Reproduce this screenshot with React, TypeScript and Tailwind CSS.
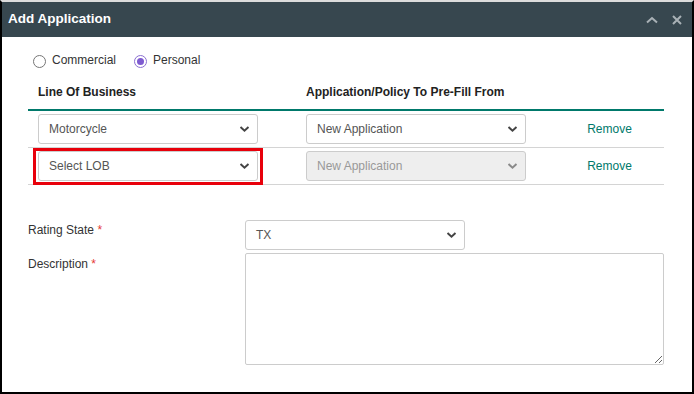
import { ReactNode } from "react";

const font = { fontFamily: "'Liberation Sans', Arial, sans-serif" };

function Chevron({ light }: { light?: boolean }) {
  return (
    <svg
      width="11"
      height="7"
      viewBox="0 0 11 7"
      className="pointer-events-none absolute right-[7px] top-1/2 -translate-y-1/2"
    >
      <path
        d="M1.5 1.5 L5.5 5.2 L9.5 1.5"
        fill="none"
        stroke={light ? "#8a8a8a" : "#444"}
        strokeWidth="2"
      />
    </svg>
  );
}

function Select({ value, disabled, className = "" }: { value: string; disabled?: boolean; className?: string }) {
  return (
    <div
      className={`relative flex h-[30px] items-center rounded-[3px] border border-[#cccccc] pl-[10px] text-[12px] ${
        disabled ? "bg-[#eeeeee] text-[#999]" : "bg-white text-[#555]"
      } ${className}`}
    >
      {value}
      <Chevron light={disabled} />
    </div>
  );
}

function Row({ children }: { children: ReactNode }) {
  return (
    <div className="grid h-[37px] grid-cols-[268px_259px_1fr] items-center border-b border-[#d4d4d4]">
      {children}
    </div>
  );
}

export default function App() {
  return (
    <div className="h-[394px] w-[694px] bg-white" style={font}>
      <div className="flex h-full flex-col border-x-2 border-b-2 border-t-[2px] border-black border-t-[#dcdcdc]">
        {/* header */}
        <div className="flex h-[35px] items-center bg-[#37474f] pl-[6px] pr-[10px]">
          <span className="text-[13.5px] font-bold text-white">Add Application</span>
          <div className="ml-auto flex items-center gap-[14px]">
            <svg width="12" height="8" viewBox="0 0 12 8">
              <path d="M1 6.5 L6 2 L11 6.5" fill="none" stroke="#a9b1b6" strokeWidth="2" />
            </svg>
            <svg width="10" height="10" viewBox="0 0 10 10">
              <path d="M1 1 L9 9 M9 1 L1 9" fill="none" stroke="#a9b1b6" strokeWidth="2" />
            </svg>
          </div>
        </div>

        <div className="px-[26px] pt-[17px] text-[12px] text-[#333]">
          {/* radios */}
          <div className="flex items-center pl-[5px]">
            <span className="h-[13px] w-[13px] rounded-full border border-[#767676] bg-white" />
            <span className="ml-[6px] -mt-[3px]">Commercial</span>
            <span className="ml-[18px] flex h-[13px] w-[13px] items-center justify-center rounded-full border border-[#8b6fd1] bg-white">
              <span className="h-[7px] w-[7px] rounded-full bg-[#7e5bd0]" />
            </span>
            <span className="ml-[6px] -mt-[3px]">Personal</span>
          </div>

          {/* table */}
          <div className="mt-[6px] w-[636px]">
            <div className="grid h-[36px] grid-cols-[268px_259px_1fr] items-center border-b-2 border-[#00796b] font-bold text-[#222]">
              <div className="pl-[10px]">Line Of Business</div>
              <div className="pl-[10px]">Application/Policy To Pre-Fill From</div>
              <div />
            </div>
            <Row>
              <div className="pl-[10px]">
                <Select value="Motorcycle" className="w-[220px]" />
              </div>
              <div className="pl-[10px]">
                <Select value="New Application" className="w-[220px]" />
              </div>
              <div className="text-center text-[#00796b]">Remove</div>
            </Row>
            <Row>
              <div className="pl-[10px]">
                <div className="relative w-[220px]">
                  <Select value="Select LOB" />
                  <div className="absolute -left-[5px] -right-[5px] -top-[3px] -bottom-[4px] border-[3px] border-[#e8000b]" />
                </div>
              </div>
              <div className="pl-[10px]">
                <Select value="New Application" disabled className="w-[220px]" />
              </div>
              <div className="text-center text-[#00796b]">Remove</div>
            </Row>
          </div>

          {/* form */}
          <div className="mt-[35px] grid grid-cols-[217px_1fr] gap-y-[3px]">
            <div className="pt-[1px]">
              Rating State <span className="text-[#e53935]">*</span>
            </div>
            <div>
              <Select value="TX" className="w-[220px] text-[#333]" />
            </div>
            <div className="pt-[2px]">
              Description <span className="text-[#e53935]">*</span>
            </div>
            <div>
              <textarea className="block h-[112px] w-[419px] rounded-[2px] border border-[#cccccc] bg-white" />
            </div>
          </div>
        </div>
      </div>
    </div>
  );
}
